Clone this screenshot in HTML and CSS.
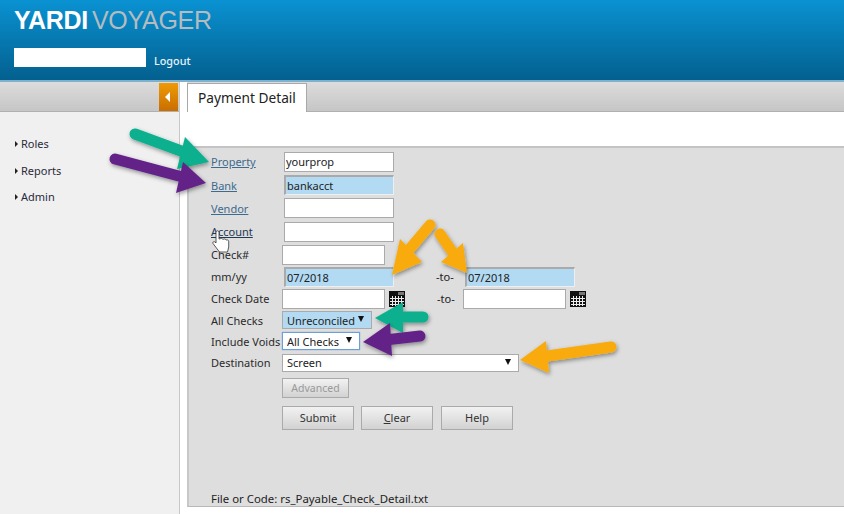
FILE: index.html
```html
<!DOCTYPE html>
<html lang="en">
<head>
    <meta charset="UTF-8">
    <title>Payment Detail</title>
    <link rel="stylesheet" href="styles.css">
</head>
<body>
    <header class="topbar">
        <div class="logo"><b>YARDI</b><span>VOYAGER</span></div>
        <div class="userline">
            <div class="userbox"></div>
            <a class="logout" href="#">Logout</a>
        </div>
    </header>

    <div class="main">
        <aside class="sidebar">
            <div class="sidebar-head"><button class="collapse"></button></div>
            <ul class="menu">
                <li>Roles</li>
                <li>Reports</li>
                <li>Admin</li>
            </ul>
        </aside>

        <div class="content">
            <div class="tabbar"><div class="tab">Payment Detail</div></div>
            <div class="whitespace"></div>

            <form class="report">
                <div class="row tall"><a class="label" href="#">Property</a><input class="wide" value="yourprop"></div>
                <div class="row tall"><a class="label" href="#">Bank</a><input class="wide required" value="bankacct"></div>
                <div class="row tall"><a class="label" href="#">Vendor</a><input class="wide"></div>
                <div class="row tall"><a class="label hover" href="#">Account</a><input class="wide"></div>
                <div class="row"><span class="label">Check#</span><input class="narrow"></div>
                <div class="row">
                    <span class="label">mm/yy</span><input class="wide required" value="07/2018">
                    <span class="to">-to-</span><input class="wide required to-input" value="07/2018">
                </div>
                <div class="row">
                    <span class="label">Check Date</span><input class="narrow">
                    <svg class="cal" viewBox="0 0 16 16"><use href="#calendar"/></svg>
                    <span class="to to-cal">-to-</span><input class="narrow">
                    <svg class="cal" viewBox="0 0 16 16"><use href="#calendar"/></svg>
                </div>
                <div class="row first-short">
                    <span class="label">All Checks</span>
                    <div class="select sel-unrec"><select><option>Unreconciled</option></select></div>
                </div>
                <div class="row short">
                    <span class="label">Include Voids</span>
                    <div class="select sel-voids"><select><option>All Checks</option></select></div>
                </div>
                <div class="row short">
                    <span class="label">Destination</span>
                    <div class="select sel-dest"><select><option>Screen</option></select></div>
                </div>
                <div class="row-btn"><button type="button" class="btn advanced" disabled>Advanced</button></div>
                <div class="buttons">
                    <button type="button" class="btn">Submit</button>
                    <button type="button" class="btn"><u>C</u>lear</button>
                    <button type="button" class="btn">Help</button>
                </div>
                <div class="filecode">File or Code: rs_Payable_Check_Detail.txt</div>
            </form>
        </div>
    </div>

    <!-- callout arrows drawn over the screenshot -->
    <svg class="overlay" width="844" height="514" viewBox="0 0 844 514">
        <defs>
            <filter id="shadow" x="-30%" y="-30%" width="160%" height="160%">
                <feDropShadow dx="1" dy="2" stdDeviation="2" flood-color="#000" flood-opacity="0.4"/>
            </filter>
            <symbol id="calendar" viewBox="0 0 16 16">
                <rect width="16" height="16" fill="#111"/>
                <rect x="9" y="1" width="6" height="3" fill="#777"/>
                <path d="M3.500 5v10M6.500 5v10M9.500 5v10M12.500 5v10M1 7.500h14M1 10.500h14M1 13.500h14" stroke="#eee" stroke-width="1" fill="none"/>
            </symbol>
        </defs>
        <g class="arrow green" filter="url(#shadow)">
            <path d="M135 134 L192 155"/><polygon points="209,162 185,137 177,169"/>
        </g>
        <g class="arrow purple" filter="url(#shadow)">
            <path d="M115 159 L190 179"/><polygon points="206,183 183,162 176,193"/>
        </g>
        <g class="arrow orange" filter="url(#shadow)">
            <path d="M430 225 L408 251"/><polygon points="392,275 400,239 422,262"/>
        </g>
        <g class="arrow orange" filter="url(#shadow)">
            <path d="M440 234 L455 256"/><polygon points="467,273 463,243 441,262"/>
        </g>
        <g class="arrow green" filter="url(#shadow)">
            <path d="M423 317 L398 317"/><polygon points="375,318 403,302 403,333"/>
        </g>
        <g class="arrow purple" filter="url(#shadow)">
            <path d="M420 336 L385 340"/><polygon points="363,342 390,323 392,356"/>
        </g>
        <g class="arrow orange" filter="url(#shadow)">
            <path d="M611 347 L540 357"/><polygon points="520,360 546,341 549,373"/>
        </g>
        <!-- hand cursor -->
        <path class="hand" d="M216 232c0-1.600 3-1.600 3 0v7l1.200-.2c.8-.8 2.300-.4 2.500.5l.8-.1c.9-.6 2.300-.2 2.500.8l.7 0c1-.3 2 .3 2 1.300v5.700l-1.200 5h-8l-6.500-8.500c-.8-1.300 1-2.500 2-1.500l1 1z"/>
    </svg>
</body>
</html>
```

FILE: styles.css
```css
* {
    box-sizing: border-box;
}
html, body {
    height: 100%;
}
body {
    margin: 0;
    width: 844px;
    height: 514px;
    overflow: hidden;
    position: relative;
    display: flex;
    flex-direction: column;
    font-family: "Noto Sans", sans-serif;
    font-size: 11px;
    color: #222;
    background: #fff;
}

/* header */
.topbar {
    height: 82px;
    flex: none;
    padding: 8px 0 0 14px;
    background: linear-gradient(#0a92d2, #03608f);
    border-bottom: 2px solid #7fb0cc;
}
.logo {
    display: flex;
    font-family: "Liberation Sans", sans-serif;
    font-size: 25px;
    line-height: 24px;
    height: 24px;
}
.logo b {
    color: #fff;
    letter-spacing: -0.300px;
    margin-right: 4px;
}
.logo span {
    color: #b4bcc0;
    letter-spacing: -0.300px;
}
.userline {
    display: flex;
    align-items: flex-end;
    margin-top: 16px;
}
.userbox {
    width: 132px;
    height: 19px;
    background: #fff;
}
.logout {
    margin-left: 8px;
    color: #e8f2f8;
    font-size: 10.800px;
    line-height: 12px;
    font-weight: 500;
    text-decoration: none;
}

/* left menu */
.main {
    flex: 1;
    display: flex;
    min-height: 0;
}
.sidebar {
    width: 180px;
    flex: none;
    background: #f0f0f0;
    border-right: 1px solid #c8c8c8;
}
.sidebar-head {
    height: 30px;
    padding: 1px 1px 0 0;
    display: flex;
    justify-content: flex-end;
    background: linear-gradient(#dcdcdc, #c6c6c6);
    border-bottom: 1px solid #b0b0b0;
}
.collapse {
    position: relative;
    width: 19px;
    height: 28px;
    padding: 0;
    border: none;
    background: linear-gradient(#ef9a06, #c96e00);
}
.collapse::after {
    content: "";
    position: absolute;
    left: 6px;
    top: 9px;
    border: 5px solid transparent;
    border-left: 0;
    border-right-color: #fff;
}
.menu {
    list-style: none;
    margin: 0;
    padding: 20px 0 0 15px;
}
.menu li {
    position: relative;
    height: 26.500px;
    line-height: 24px;
    padding-left: 6px;
    color: #2a2a3a;
}
.menu li::before {
    content: "";
    position: absolute;
    left: 0;
    top: 9px;
    border: 3.500px solid transparent;
    border-right: 0;
    border-left-color: #222;
}

/* right side */
.content {
    flex: 1;
    min-width: 0;
    display: flex;
    flex-direction: column;
    padding-left: 7px;
}
.tabbar {
    height: 30px;
    flex: none;
    padding-top: 1px;
    background: linear-gradient(#dcdcdc, #c6c6c6);
    border-bottom: 1px solid #b0b0b0;
}
.tab {
    width: 120px;
    height: 29px;
    line-height: 27px;
    text-align: center;
    font-size: 13.700px;
    color: #222;
    background: #fff;
    border: 1px solid #a8a8a8;
    border-bottom: none;
}
.whitespace {
    height: 34px;
    flex: none;
}
.report {
    height: 361px;
    padding: 2px 0 0 22px;
    background: #dedede;
    border-top: 2px solid #c4c4c4;
    border-left: 2px solid #c8c8c8;
    border-bottom: 1px solid #b8b8b8;
}

/* form rows */
.row {
    display: flex;
    align-items: center;
    height: 22px;
}
.row.tall {
    height: 23.400px;
}
.row.first-short {
    height: 21px;
}
.row.short {
    height: 21.500px;
}
.label {
    width: 71px;
    flex: none;
    white-space: nowrap;
    color: #2a2a2a;
}
a.label {
    color: #3d6a8f;
}
a.label.hover {
    color: #1e3a55;
}
input {
    flex: none;
    height: 20px;
    padding: 0 1px;
    font: 11px "Noto Sans", sans-serif;
    color: #222;
    background: #fff;
    border: 1px solid #aaa;
}
.wide {
    width: 110px;
    margin-left: 2px;
}
.narrow {
    width: 103px;
}
.required {
    background: #b2daf2;
    border-color: #eee;
    border-top: 2px solid #aaa;
    border-left: 2px solid #aaa;
}
.to {
    margin-left: 42px;
    width: 28px;
}
.to-input {
    width: 110px;
    margin-left: 1px;
}
.to-cal {
    margin-left: 32px;
}
.to-cal + input {
    margin-left: -2px;
}
.cal {
    width: 16px;
    height: 16px;
    margin-left: 4px;
    flex: none;
}
.select {
    position: relative;
}
.select::after {
    content: "";
    position: absolute;
    right: 8px;
    top: 5px;
    border: 3px solid transparent;
    border-bottom: 0;
    border-top: 6px solid #111;
}
select {
    display: block;
    appearance: none;
    width: 100%;
    height: 18px;
    padding: 0 0 0 4px;
    font: 11px "Noto Sans", sans-serif;
    color: #222;
    background: #fff;
    border: 1px solid #aaa;
    border-radius: 0;
}
.sel-unrec {
    width: 90px;
}
.sel-unrec select {
    background: #b2daf2;
}
.sel-voids {
    width: 78px;
}
.sel-voids select {
    border-color: #6a9fd8;
    box-shadow: 0 0 1px #6a9fd8;
}
.sel-dest {
    width: 237px;
}

/* buttons */
.btn {
    font: 11px "Noto Sans", sans-serif;
    color: #333;
    width: 72px;
    height: 24px;
    padding: 0;
    background: linear-gradient(#f2f2f2, #d2d2d2);
    border: 1px solid #aaa;
    border-radius: 0;
}
.row-btn {
    padding: 4px 0 0 71px;
}
.advanced {
    width: 67px;
    height: 20px;
    color: #999;
    font-size: 10.500px;
}
.buttons {
    display: flex;
    gap: 7px;
    margin: 8px 0 0 71px;
}
.buttons .btn:last-child {
    margin-left: 1px;
}
.filecode {
    margin-top: 61px;
    line-height: 16px;
    font-size: 11.400px;
}

/* callouts */
.overlay {
    position: absolute;
    left: 0;
    top: 0;
    pointer-events: none;
}
.arrow path {
    fill: none;
    stroke-width: 11;
    stroke-linecap: round;
}
.arrow.green path { stroke: #08b08e; }
.arrow.green polygon { fill: #08b08e; }
.arrow.purple path { stroke: #642388; }
.arrow.purple polygon { fill: #642388; }
.arrow.orange path { stroke: #f9ab0b; }
.arrow.orange polygon { fill: #f9ab0b; }
.hand {
    fill: #fff;
    stroke: #333;
    stroke-width: 0.8;
}
```
